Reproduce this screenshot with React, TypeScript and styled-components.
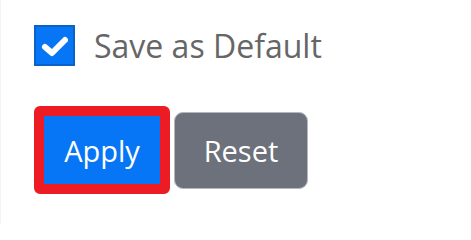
import React, { useState } from "react";
import styled, { createGlobalStyle } from "styled-components";

const GlobalStyle = createGlobalStyle`
  html, body {
    margin: 0;
    padding: 0;
    background: #fff;
  }
  body {
    font-family: "Open Sans", "Liberation Sans", sans-serif;
  }
`;

const Panel = styled.div`
  width: 471px;
  height: 224px;
  box-sizing: border-box;
  border-left: 1px solid #f3f3f3;
  padding: 25px 0 0 33px;
  display: flex;
  flex-direction: column;
  gap: 40px;
`;

const CheckRow = styled.label`
  display: flex;
  align-items: center;
  gap: 19px;
  cursor: pointer;
`;

const Box = styled.span<{ $checked: boolean }>`
  width: 41px;
  height: 41px;
  box-sizing: border-box;
  border: 2px solid ${(p) => (p.$checked ? "#0a62c9" : "#888")};
  background: ${(p) => (p.$checked ? "#0776f6" : "#fff")};
  display: flex;
  align-items: center;
  justify-content: center;
`;

const Label = styled.span`
  font-size: 32px;
  color: #666;
  line-height: 41px;
`;

const Actions = styled.div`
  display: flex;
  align-items: center;
  gap: 4px;
`;

const Button = styled.button<{ $variant: "primary" | "secondary" }>`
  font-family: "Open Sans", "Liberation Sans", sans-serif;
  font-size: 29px;
  color: #fff;
  cursor: pointer;
  box-sizing: border-box;
  padding: 0;
  ${(p) =>
    p.$variant === "primary"
      ? `
    width: 136px;
    height: 88px;
    background: #0776f6;
    border: 10px solid #ed1c24;
    border-radius: 6px;
  `
      : `
    width: 134px;
    height: 77px;
    background: #6c717b;
    border: 1px solid #b4b7bd;
    border-radius: 9px;
  `}
`;

export default function App() {
  const [checked, setChecked] = useState(true);
  return (
    <>
      <GlobalStyle />
      <Panel>
        <CheckRow onClick={() => setChecked(!checked)}>
          <Box $checked={checked}>
            {checked && (
              <svg width="30" height="26" viewBox="0 0 30 26">
                <path
                  d="M5 14 L12 20 L25 7"
                  fill="none"
                  stroke="#fff"
                  strokeWidth="6"
                  strokeLinecap="round"
                  strokeLinejoin="round"
                />
              </svg>
            )}
          </Box>
          <Label>Save as Default</Label>
        </CheckRow>
        <Actions>
          <Button $variant="primary">Apply</Button>
          <Button $variant="secondary">Reset</Button>
        </Actions>
      </Panel>
    </>
  );
}
